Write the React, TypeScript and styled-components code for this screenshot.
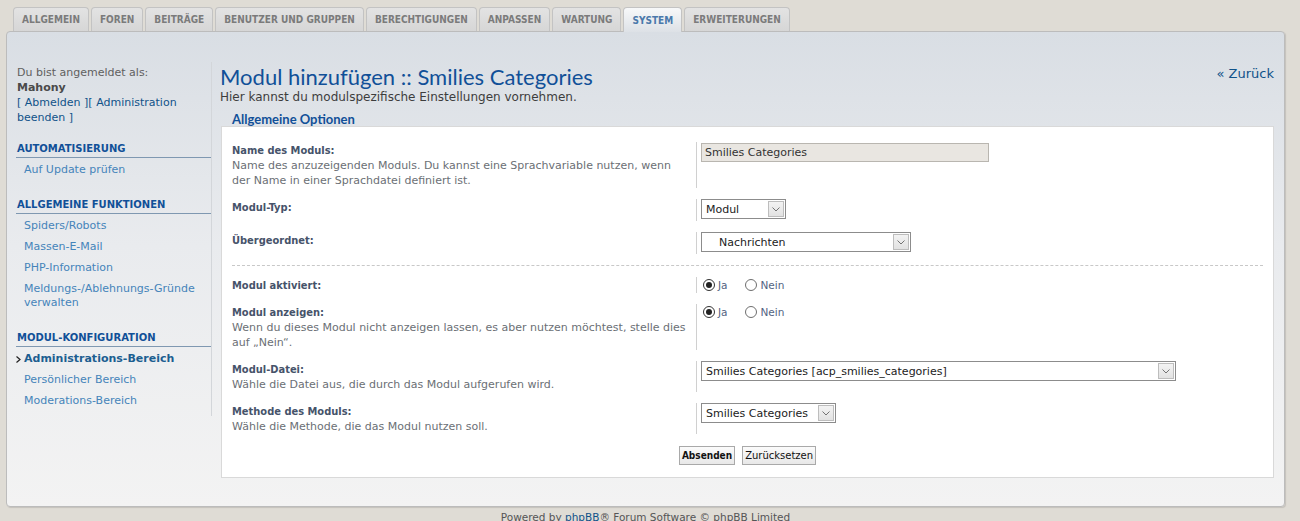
import React from "react";
import styled, { createGlobalStyle } from "styled-components";

const GlobalStyle = createGlobalStyle`
  html, body { margin: 0; padding: 0; }
  body {
    background: #dfdcd5;
    font-family: "DejaVu Sans", Verdana, sans-serif;
    font-size: 11px;
    color: #536482;
  }
  * { box-sizing: border-box; }
`;

const Page = styled.div`
  width: 1300px;
  height: 521px;
  overflow: hidden;
  padding: 7px 15px 0 6px;
`;

const Tabs = styled.ul`
  display: flex;
  gap: 2px;
  margin: 0;
  padding: 0 0 0 7px;
  list-style: none;
  height: 24px;
  position: relative;
  z-index: 1;
`;

const Tab = styled.li<{ $active?: boolean }>`
  height: ${(p) => (p.$active ? "25px" : "24px")};
  padding: 0 8px;
  display: flex;
  align-items: center;
  font-family: "DejaVu Sans Condensed", "DejaVu Sans", sans-serif;
  font-weight: bold;
  font-size: 10px;
  color: ${(p) => (p.$active ? "#4a79ab" : "#7b7b7b")};
  background: ${(p) =>
    p.$active
      ? "linear-gradient(#f7f8f9, #dde1e6)"
      : "linear-gradient(#e3e3e3, #d6d6d6)"};
  border: 1px solid #c3c3c3;
  border-bottom: none;
  border-radius: 4px 4px 0 0;
`;

const Panel = styled.div`
  height: 476px;
  border: 1px solid #bcbcbc;
  border-radius: 4px;
  background: linear-gradient(#d9dee4 0%, #e9ebee 45%, #f3f3f3 100%);
  box-shadow: 1px 1px 1px rgba(0, 0, 0, 0.12);
  display: flex;
  align-items: flex-start;
  gap: 8px;
  padding: 30px 10px 0 9px;
`;

const Sidebar = styled.nav`
  width: 196px;
  flex-shrink: 0;
  border-right: 1px solid #d3d6da;
  padding: 3px 0 4px 0;
`;

const UserBlock = styled.div`
  padding-left: 1px;
  line-height: 15px;
  color: #5f5f5f;
`;

const UserName = styled.div`
  font-weight: bold;
  color: #4a4a4a;
`;

const UserLinks = styled.div`
  color: #105289;
`;

const MenuHeader = styled.div`
  margin-top: 17px;
  padding: 0 0 2px 1px;
  font-weight: bold;
  font-size: 10px;
  line-height: 13px;
  color: #115098;
  border-bottom: 1px solid #7f98b1;
`;

const MenuList = styled.ul`
  list-style: none;
  margin: 0;
  padding: 2px 0 0 0;
`;

const MenuItem = styled.li<{ $active?: boolean }>`
  display: flex;
  align-items: flex-start;
  padding: 3px 6px 4px 0;
  line-height: 14px;
  font-size: 11px;
  font-weight: ${(p) => (p.$active ? "bold" : "normal")};
  color: ${(p) => (p.$active ? "#1c5e90" : "#4584ba")};
`;

const MenuMarker = styled.span`
  width: 8px;
  height: 14px;
  flex-shrink: 0;
  display: flex;
  align-items: center;
`;

const Content = styled.main`
  flex: 1;
  min-width: 0;
  display: flex;
  flex-direction: column;
`;

const HeadRow = styled.div`
  display: flex;
  justify-content: space-between;
  align-items: flex-start;
  padding-top: 2px;
`;

const Title = styled.h1`
  margin: 0;
  font-family: Lato, "Open Sans", sans-serif;
  font-weight: normal;
  font-size: 22px;
  line-height: 26px;
  color: #115098;
`;

const BackLink = styled.a`
  margin-top: 2px;
  font-size: 13px;
  line-height: 16px;
  color: #105289;
  text-decoration: none;
`;

const Intro = styled.p`
  margin: 0;
  font-size: 12px;
  line-height: 15px;
  color: #3d3d3d;
`;

const Legend = styled.div`
  margin: 7px 0 0 12px;
  font-family: Lato, "Open Sans", sans-serif;
  font-weight: bold;
  font-size: 13px;
  line-height: 14px;
  color: #115098;
`;

const Box = styled.div`
  margin: 0 0 0 1px;
  background: #fff;
  border: 1px solid #d9d9d9;
  padding: 9px 10px 12px 10px;
`;

const Row = styled.div`
  display: grid;
  grid-template-columns: 45% 1fr;
  padding: 6px 0 5px 0;
`;

const Dt = styled.div`
  line-height: 15px;
  padding: 1px 10px 0 0;
`;

const Label = styled.div`
  font-family: "DejaVu Sans Condensed", "DejaVu Sans", sans-serif;
  font-weight: bold;
  color: #46536a;
`;

const Explain = styled.div`
  color: #6b6f75;
`;

const Dd = styled.div`
  border-left: 1px solid #d0d0d0;
  padding-left: 4px;
  display: flex;
  flex-direction: column;
  align-items: flex-start;
`;

const TextInput = styled.div`
  width: 288px;
  height: 19px;
  margin-top: 1px;
  border: 1px solid #b9b6b0;
  background: #e9e6e1;
  padding-left: 3px;
  display: flex;
  align-items: center;
  font-size: 11px;
  color: #333;
`;

const SelectBox = styled.div<{ $w: number }>`
  width: ${(p) => p.$w}px;
  height: 20px;
  margin-bottom: 2px;
  border: 1px solid #8c8c8c;
  background: #fff;
  display: flex;
  font-size: 11px;
  color: #222;
`;

const SelectText = styled.span<{ $indent?: number }>`
  flex: 1;
  display: flex;
  align-items: center;
  padding-left: ${(p) => p.$indent ?? 4}px;
  white-space: nowrap;
  overflow: hidden;
`;

const SelectArrow = styled.span`
  width: 16px;
  margin: 1px;
  border: 1px solid #bdbdbd;
  background: linear-gradient(#f3f3f3, #e2e2e2);
  display: flex;
  align-items: center;
  justify-content: center;
`;

const RadioGroup = styled.div`
  display: flex;
  align-items: center;
  height: 15px;
  padding-left: 2px;
  gap: 18px;
`;

const RadioLabel = styled.label`
  display: flex;
  align-items: center;
  gap: 3px;
  color: #536482;
  font-size: 10.5px;
`;

const RadioDot = styled.span<{ $checked?: boolean }>`
  position: relative;
  width: 12px;
  height: 12px;
  border-radius: 50%;
  border: 1px solid ${(p) => (p.$checked ? "#333" : "#6e6e6e")};
  background: #fff;
  &::after {
    content: "";
    position: absolute;
    inset: 2px;
    border-radius: 50%;
    background: #222;
    display: ${(p) => (p.$checked ? "block" : "none")};
  }
`;

const Divider = styled.hr`
  margin: 6px 0 5px 0;
  border: none;
  border-top: 1px dashed #c8c8c8;
`;

const Buttons = styled.div`
  display: flex;
  justify-content: center;
  gap: 7px;
  padding-top: 7px;
`;

const Button = styled.button<{ $primary?: boolean }>`
  height: 19px;
  padding: 0 2px;
  border: 1px solid #a9a9a9;
  border-radius: 0;
  background: linear-gradient(#fbfbfb, #e8e8e8);
  font-family: ${(p) =>
    p.$primary ? '"DejaVu Sans Condensed", "DejaVu Sans", sans-serif' : '"DejaVu Sans", sans-serif'};
  font-size: 10px;
  font-weight: ${(p) => (p.$primary ? "bold" : "normal")};
  color: #111;
`;

const Footer = styled.div`
  padding-top: 4px;
  text-align: center;
  font-size: 10.5px;
  line-height: 12px;
  color: #555;
`;

const FooterLink = styled.a`
  color: #105289;
  text-decoration: none;
`;

const Chevron = () => (
  <svg width="8" height="5" viewBox="0 0 8 5">
    <path d="M0.5 0.5 L4 4 L7.5 0.5" stroke="#737373" strokeWidth="1" fill="none" />
  </svg>
);

const Marker = () => (
  <svg width="5" height="7" viewBox="0 0 5 7">
    <path d="M0.5 0.5 L4 3.5 L0.5 6.5" stroke="#222" strokeWidth="1.2" fill="none" />
  </svg>
);

const Select = ({ w, text, indent }: { w: number; text: string; indent?: number }) => (
  <SelectBox $w={w}>
    <SelectText $indent={indent}>{text}</SelectText>
    <SelectArrow>
      <Chevron />
    </SelectArrow>
  </SelectBox>
);

const YesNo = () => (
  <RadioGroup>
    <RadioLabel>
      <RadioDot $checked /> Ja
    </RadioLabel>
    <RadioLabel>
      <RadioDot /> Nein
    </RadioLabel>
  </RadioGroup>
);

const tabs = [
  "ALLGEMEIN",
  "FOREN",
  "BEITRÄGE",
  "BENUTZER UND GRUPPEN",
  "BERECHTIGUNGEN",
  "ANPASSEN",
  "WARTUNG",
  "SYSTEM",
  "ERWEITERUNGEN",
];

const menu: { header: string; items: string[]; active?: number }[] = [
  { header: "AUTOMATISIERUNG", items: ["Auf Update prüfen"] },
  {
    header: "ALLGEMEINE FUNKTIONEN",
    items: ["Spiders/Robots", "Massen-E-Mail", "PHP-Information", "Meldungs-/Ablehnungs-Gründe verwalten"],
  },
  {
    header: "MODUL-KONFIGURATION",
    items: ["Administrations-Bereich", "Persönlicher Bereich", "Moderations-Bereich"],
    active: 0,
  },
];

export default function App() {
  return (
    <>
      <GlobalStyle />
      <Page>
        <Tabs>
          {tabs.map((t) => (
            <Tab key={t} $active={t === "SYSTEM"}>
              {t}
            </Tab>
          ))}
        </Tabs>
        <Panel>
          <Sidebar>
            <UserBlock>
              <div>Du bist angemeldet als:</div>
              <UserName>Mahony</UserName>
              <UserLinks>[ Abmelden ][ Administration beenden ]</UserLinks>
            </UserBlock>
            {menu.map((sec) => (
              <React.Fragment key={sec.header}>
                <MenuHeader>{sec.header}</MenuHeader>
                <MenuList>
                  {sec.items.map((it, i) => (
                    <MenuItem key={it} $active={sec.active === i}>
                      <MenuMarker>{sec.active === i ? <Marker /> : null}</MenuMarker>
                      <span>{it}</span>
                    </MenuItem>
                  ))}
                </MenuList>
              </React.Fragment>
            ))}
          </Sidebar>
          <Content>
            <HeadRow>
              <Title>Modul hinzufügen :: Smilies Categories</Title>
              <BackLink href="#">« Zurück</BackLink>
            </HeadRow>
            <Intro>Hier kannst du modulspezifische Einstellungen vornehmen.</Intro>
            <Legend>Allgemeine Optionen</Legend>
            <Box>
              <Row>
                <Dt>
                  <Label>Name des Moduls:</Label>
                  <Explain>
                    Name des anzuzeigenden Moduls. Du kannst eine Sprachvariable nutzen, wenn der Name in einer
                    Sprachdatei definiert ist.
                  </Explain>
                </Dt>
                <Dd>
                  <TextInput>Smilies Categories</TextInput>
                </Dd>
              </Row>
              <Row>
                <Dt>
                  <Label>Modul-Typ:</Label>
                </Dt>
                <Dd>
                  <Select w={85} text="Modul" />
                </Dd>
              </Row>
              <Row>
                <Dt>
                  <Label>Übergeordnet:</Label>
                </Dt>
                <Dd>
                  <Select w={210} text="Nachrichten" indent={17} />
                </Dd>
              </Row>
              <Divider />
              <Row>
                <Dt>
                  <Label>Modul aktiviert:</Label>
                </Dt>
                <Dd>
                  <YesNo />
                </Dd>
              </Row>
              <Row>
                <Dt>
                  <Label>Modul anzeigen:</Label>
                  <Explain>
                    Wenn du dieses Modul nicht anzeigen lassen, es aber nutzen möchtest, stelle dies auf „Nein“.
                  </Explain>
                </Dt>
                <Dd>
                  <YesNo />
                </Dd>
              </Row>
              <Row>
                <Dt>
                  <Label>Modul-Datei:</Label>
                  <Explain>Wähle die Datei aus, die durch das Modul aufgerufen wird.</Explain>
                </Dt>
                <Dd>
                  <Select w={475} text="Smilies Categories [acp_smilies_categories]" />
                </Dd>
              </Row>
              <Row>
                <Dt>
                  <Label>Methode des Moduls:</Label>
                  <Explain>Wähle die Methode, die das Modul nutzen soll.</Explain>
                </Dt>
                <Dd>
                  <Select w={135} text="Smilies Categories" />
                </Dd>
              </Row>
              <Buttons>
                <Button $primary>Absenden</Button>
                <Button>Zurücksetzen</Button>
              </Buttons>
            </Box>
          </Content>
        </Panel>
        <Footer>
          Powered by <FooterLink href="#">phpBB</FooterLink>® Forum Software © phpBB Limited
        </Footer>
      </Page>
    </>
  );
}
